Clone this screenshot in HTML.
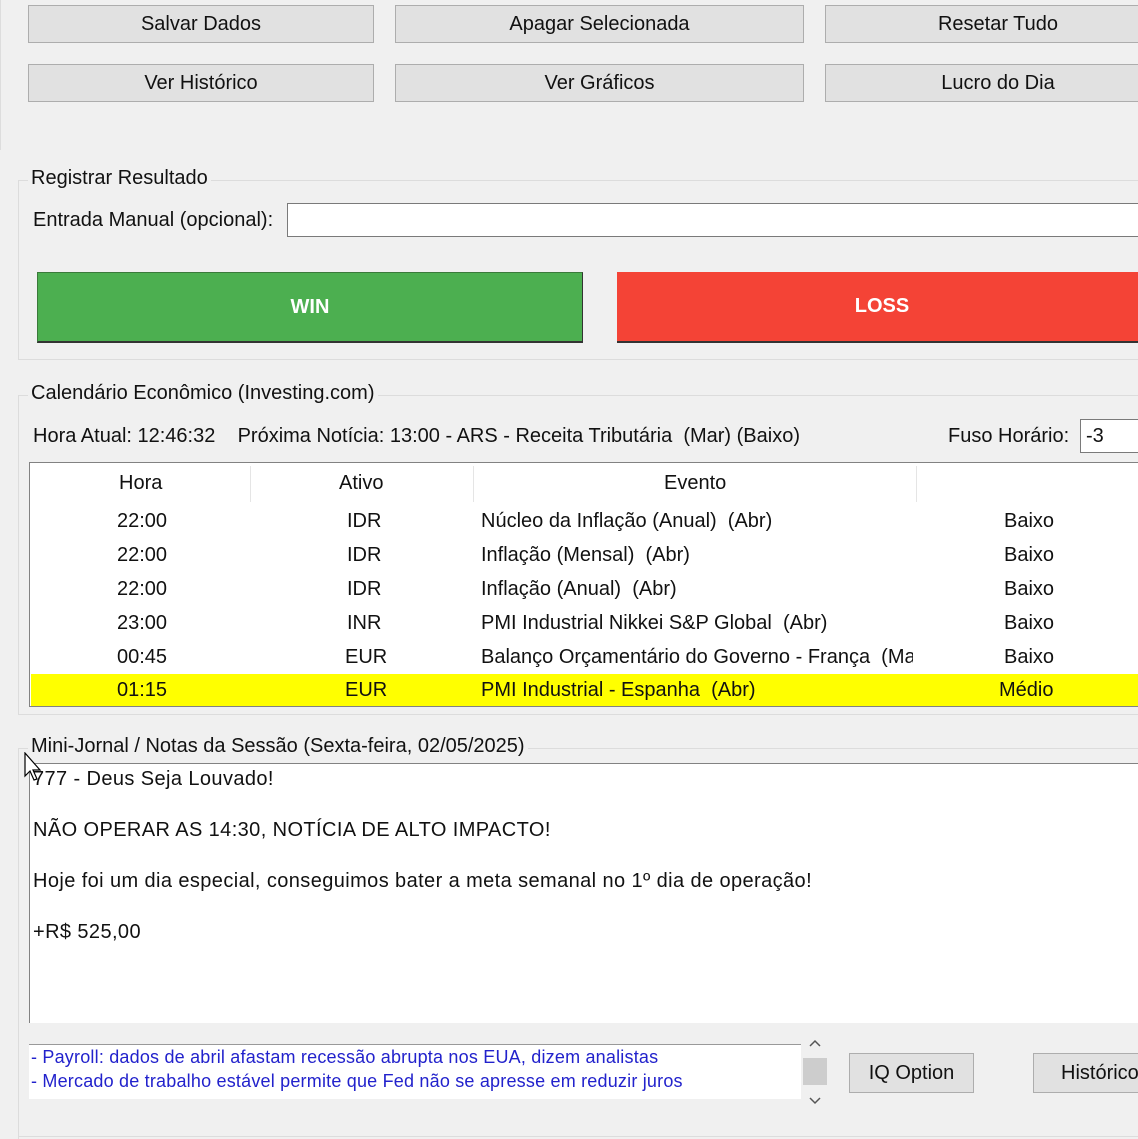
<!DOCTYPE html><html><head><meta charset="utf-8"><style>
body{margin:0;width:1138px;height:1138px;background:#f0f0f0;position:relative;overflow:hidden;font-family:"Liberation Sans",sans-serif;color:#111}
.a{position:absolute;white-space:nowrap}
.btn{position:absolute;background:#e1e1e1;border:1px solid #adadad;box-sizing:border-box;text-align:center;font-size:20px;display:flex;align-items:center;justify-content:center;white-space:nowrap}
.grp{position:absolute;border:1px solid #dcdcdc;border-right:none}
.t{font-size:20px}
.row{position:absolute;left:31px;width:1107px;height:34px;font-size:20px;white-space:nowrap}
.row span{position:absolute;top:5px}
</style></head><body>
<div class="btn" style="left:28px;top:5px;width:346px;height:38px">Salvar Dados</div>
<div class="btn" style="left:395px;top:5px;width:409px;height:38px">Apagar Selecionada</div>
<div class="btn" style="left:825px;top:5px;width:346px;height:38px">Resetar Tudo</div>
<div class="btn" style="left:28px;top:64px;width:346px;height:38px">Ver Histórico</div>
<div class="btn" style="left:395px;top:64px;width:409px;height:38px">Ver Gráficos</div>
<div class="btn" style="left:825px;top:64px;width:346px;height:38px">Lucro do Dia</div>
<div class="a" style="left:0;top:0;width:1px;height:150px;background:#ddd"></div>

<div class="grp" style="left:18px;top:180px;width:1120px;height:178px"></div>
<div class="a t" style="left:28px;top:167px;background:#f0f0f0;padding:0 3px">Registrar Resultado</div>
<div class="a t" style="left:33px;top:209px">Entrada Manual (opcional):</div>
<div class="a" style="left:287px;top:203px;width:860px;height:34px;background:#fff;border:1px solid #7a7a7a;box-sizing:border-box"></div>
<div class="a" style="left:37px;top:272px;width:546px;height:71px;background:#4caf50;border:1px solid #3a7a3a;border-right-color:#333;border-bottom:2px solid #333;box-sizing:border-box;color:#fff;font-weight:bold;font-size:20px;display:flex;align-items:center;justify-content:center">WIN</div>
<div class="a" style="left:617px;top:272px;width:530px;height:71px;background:#f44336;border-bottom:2px solid #333;box-sizing:border-box;color:#fff;font-weight:bold;font-size:20px;display:flex;align-items:center;justify-content:center">LOSS</div>

<div class="grp" style="left:18px;top:395px;width:1120px;height:318px"></div>
<div class="a t" style="left:28px;top:382px;background:#f0f0f0;padding:0 3px">Calendário Econômico (Investing.com)</div>
<div class="a t" style="left:33px;top:425px">Hora Atual: 12:46:32&nbsp;&nbsp;&nbsp;&nbsp;Próxima Notícia: 13:00 - ARS - Receita Tributária&nbsp; (Mar) (Baixo)</div>
<div class="a t" style="left:948px;top:425px">Fuso Horário:</div>
<div class="a t" style="left:1080px;top:419px;width:70px;height:34px;background:#fff;border:1px solid #7a7a7a;box-sizing:border-box;padding:5px 0 0 5px">-3</div>
<div class="a" style="left:29px;top:462px;width:1120px;height:245px;background:#fff;border:1px solid #828282;box-sizing:border-box"></div>
<div class="row" style="top:467px"><span style="left:88px">Hora</span><span style="left:308px">Ativo</span><span style="left:633px">Evento</span></div>
<div class="a" style="left:250px;top:466px;width:1px;height:36px;background:#e5e5e5"></div>
<div class="a" style="left:473px;top:466px;width:1px;height:36px;background:#e5e5e5"></div>
<div class="a" style="left:916px;top:466px;width:1px;height:36px;background:#e5e5e5"></div>
<div class="row" style="top:505px"><span style="left:86px">22:00</span><span style="left:316px">IDR</span><span style="left:450px">Núcleo da Inflação (Anual)&nbsp; (Abr)</span><span style="left:973px">Baixo</span></div>
<div class="row" style="top:539px"><span style="left:86px">22:00</span><span style="left:316px">IDR</span><span style="left:450px">Inflação (Mensal)&nbsp; (Abr)</span><span style="left:973px">Baixo</span></div>
<div class="row" style="top:573px"><span style="left:86px">22:00</span><span style="left:316px">IDR</span><span style="left:450px">Inflação (Anual)&nbsp; (Abr)</span><span style="left:973px">Baixo</span></div>
<div class="row" style="top:607px"><span style="left:86px">23:00</span><span style="left:316px">INR</span><span style="left:450px">PMI Industrial Nikkei S&amp;P Global&nbsp; (Abr)</span><span style="left:973px">Baixo</span></div>
<div class="row" style="top:641px"><span style="left:86px">00:45</span><span style="left:314px">EUR</span><span style="left:450px;width:432px;overflow:hidden">Balanço Orçamentário do Governo - França&nbsp; (Mai)</span><span style="left:973px">Baixo</span></div>
<div class="row" style="top:674px;background:#ffff00;height:32px"><span style="left:86px;top:5px">01:15</span><span style="left:314px;top:5px">EUR</span><span style="left:450px;top:5px">PMI Industrial - Espanha&nbsp; (Abr)</span><span style="left:968px;top:5px">Médio</span></div>

<div class="grp" style="left:18px;top:748px;width:1120px;height:390px;border-bottom:none"></div>
<div class="a" style="left:18px;top:1136px;width:1120px;height:1px;background:#dcdcdc"></div>
<div class="a t" style="left:28px;top:735px;background:#f0f0f0;padding:0 3px">Mini-Jornal / Notas da Sessão (Sexta-feira, 02/05/2025)</div>
<div class="a" style="left:29px;top:763px;width:1120px;height:260px;background:#fff;border-left:1px solid #828282;border-top:1px solid #828282;box-sizing:border-box"></div>
<div class="a" style="left:33px;top:754px;font-size:20px;letter-spacing:0.4px;line-height:51px">777 - Deus Seja Louvado!<br>NÃO OPERAR AS 14:30, NOTÍCIA DE ALTO IMPACTO!<br>Hoje foi um dia especial, conseguimos bater a meta semanal no 1º dia de operação!<br>+R$ 525,00</div>
<div class="a" style="left:29px;top:1044px;width:772px;height:55px;background:#fff;border-top:1px solid #999;box-sizing:border-box;color:#2222cc;font-size:18px;line-height:24px;padding-left:2px;letter-spacing:0.2px">- Payroll: dados de abril afastam recessão abrupta nos EUA, dizem analistas<br>- Mercado de trabalho estável permite que Fed não se apresse em reduzir juros</div>
<div class="a" style="left:802px;top:1030px;width:26px;height:84px;background:#f0f0f0"></div>
<div class="a" style="left:803px;top:1058px;width:24px;height:27px;background:#cdcdcd"></div>
<svg class="a" style="left:808px;top:1038px" width="14" height="10"><path d="M2 8 L7 3 L12 8" fill="none" stroke="#555" stroke-width="1.5"/></svg>
<svg class="a" style="left:808px;top:1096px" width="14" height="10"><path d="M2 2 L7 7 L12 2" fill="none" stroke="#555" stroke-width="1.5"/></svg>
<div class="btn" style="left:849px;top:1053px;width:125px;height:40px">IQ Option</div>
<div class="btn" style="left:1033px;top:1053px;width:130px;height:40px;justify-content:flex-start;padding-left:27px">Histórico</div>
<svg class="a" style="left:24px;top:752px" width="22" height="32" viewBox="0 0 22 32"><path d="M1 1 L1 24 L6 19 L10 28 L13 27 L9 18 L16 18 Z" fill="#fff" stroke="#000" stroke-width="1.2"/></svg>
</body></html>
